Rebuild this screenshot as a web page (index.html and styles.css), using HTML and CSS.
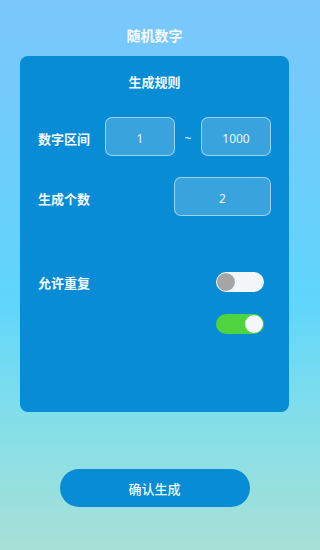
FILE: index.html
```html
<!DOCTYPE html>
<html lang="zh-CN">
<head>
<meta charset="utf-8">
<title>随机数字</title>
<link rel="stylesheet" href="styles.css">
</head>
<body>
<div class="page">
  <h1 class="title">随机数字</h1>
  <section class="card">
    <h2 class="card-title">生成规则</h2>
    <div class="row row-range">
      <span class="label">数字区间</span>
      <div class="range">
        <div class="field field-sm">1</div>
        <span class="tilde">~</span>
        <div class="field field-sm">1000</div>
      </div>
    </div>
    <div class="row row-count">
      <span class="label">生成个数</span>
      <div class="field field-md">2</div>
    </div>
    <div class="row row-toggle row-repeat">
      <span class="label">允许重复</span>
      <span class="switch"><span class="knob"></span></span>
    </div>
    <div class="row row-toggle row-second">
      <span class="label"></span>
      <span class="switch switch-on"><span class="knob"></span></span>
    </div>
  </section>
  <button class="confirm" type="button">确认生成</button>
</div>
</body>
</html>
```

FILE: styles.css
```css
html, body {
  margin: 0;
  padding: 0;
}
body {
  width: 309px;
  height: 550px;
  overflow: hidden;
  background: linear-gradient(180deg, #7cc7fb 0%, #6dcefb 30%, #5fd6fc 55%, #86dfe8 78%, #a8e0d6 100%);
  font-family: "Noto Sans CJK SC", "Noto Sans", sans-serif;
  color: #ffffff;
}
.page {
  display: flex;
  flex-direction: column;
  align-items: center;
  padding-top: 26px;
}
.title {
  margin: 0;
  font-size: 14px;
  line-height: 18px;
  font-weight: 700;
  color: #f4fbff;
}
.card {
  box-sizing: border-box;
  width: 269px;
  height: 356px;
  margin-top: 12px;
  background: #088cd5;
  border-radius: 8px;
  padding: 17px 18px 0 18px;
  display: flex;
  flex-direction: column;
}
.card-title {
  margin: 0;
  text-align: center;
  font-size: 13px;
  line-height: 18px;
  font-weight: 700;
  color: #f2f9fd;
}
.row {
  display: flex;
  align-items: center;
  justify-content: space-between;
}
.label {
  font-size: 13px;
  font-weight: 700;
  line-height: 18px;
  color: #f4fafe;
  padding-top: 5px;
}
.row-range {
  margin-top: 26px;
  height: 39px;
}
.row-count {
  margin-top: 21px;
  height: 39px;
}
.range {
  display: flex;
  align-items: center;
}
.tilde {
  width: 26px;
  text-align: center;
  font-family: "Noto Sans", sans-serif;
  font-size: 12px;
  color: #e6f3fb;
  padding-top: 4px;
}
.field {
  box-sizing: border-box;
  height: 39px;
  border: 1px solid rgba(255, 255, 255, 0.5);
  background: rgba(255, 255, 255, 0.2);
  border-radius: 7px;
  display: flex;
  align-items: center;
  justify-content: center;
  padding-top: 4px;
  font-family: "Noto Sans", sans-serif;
  font-size: 12px;
  color: #eaf5fc;
}
.field-sm {
  width: 70px;
}
.field-md {
  width: 97px;
}
.row-toggle {
  height: 20px;
  padding-right: 7px;
}
.row-toggle .label {
  padding-top: 1px;
}
.row-repeat {
  margin-top: 56px;
}
.row-second {
  margin-top: 22px;
}
.switch {
  position: relative;
  box-sizing: border-box;
  width: 48px;
  height: 20px;
  border-radius: 10px;
  background: #f3f6f9;
  display: flex;
  align-items: center;
  padding: 0 1px;
}
.knob {
  width: 18px;
  height: 18px;
  border-radius: 50%;
  background: #a5a5a5;
}
.switch-on {
  background: #4fd43f;
  justify-content: flex-end;
}
.switch-on .knob {
  background: #f5f8fb;
}
.confirm {
  margin-top: 57px;
  width: 190px;
  height: 38px;
  border: none;
  border-radius: 19px;
  background: #088cd5;
  color: #f4fafe;
  font-family: "Noto Sans CJK SC", "Noto Sans", sans-serif;
  font-size: 13px;
  font-weight: 500;
  padding: 0;
}
```
